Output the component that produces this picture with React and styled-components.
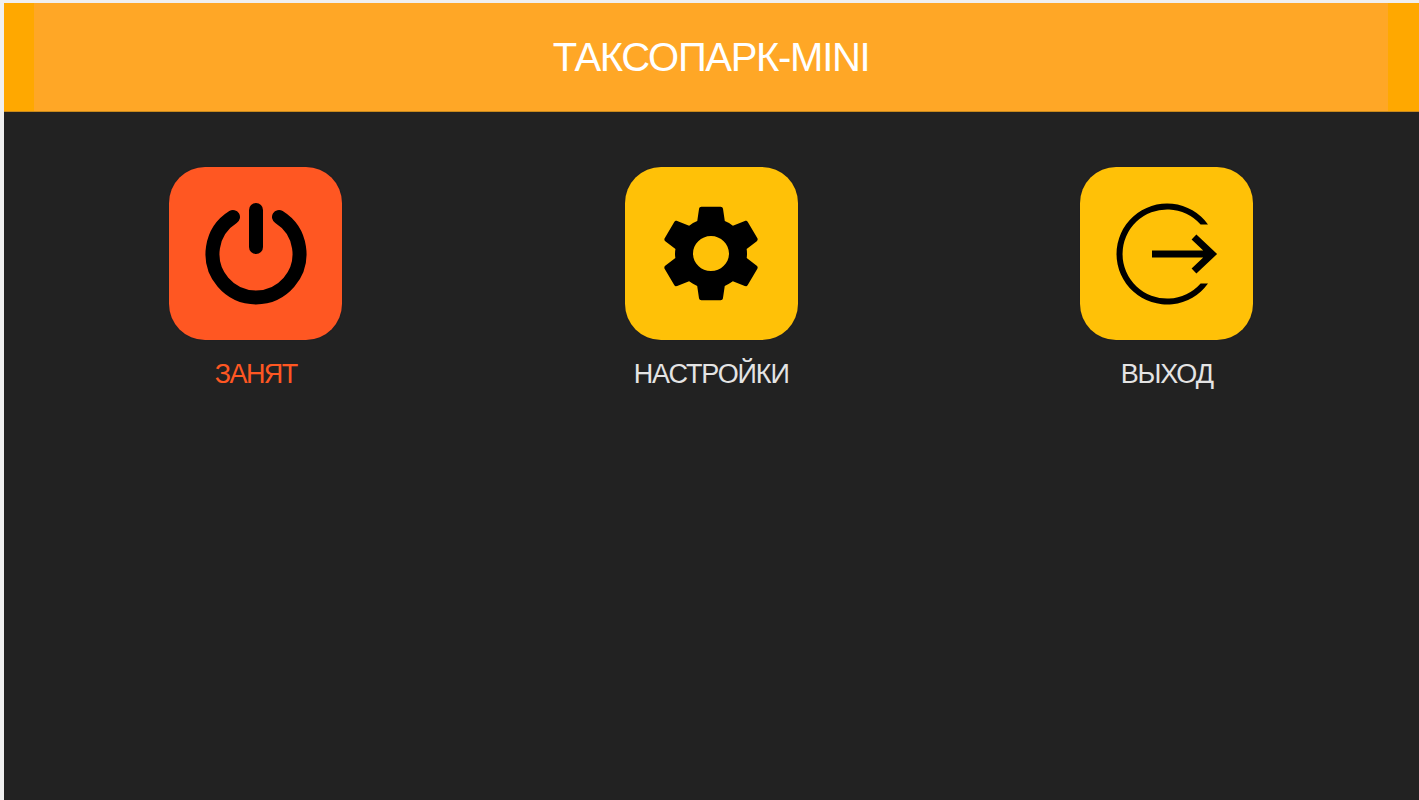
import styled, { createGlobalStyle } from 'styled-components';

const GlobalStyle = createGlobalStyle`
  html, body {
    margin: 0;
    height: 100%;
    background-color: #f0f0f0;
  }
  #root {
    height: 100%;
  }
`;

const Screen = styled.div`
  display: flex;
  flex-direction: column;
  height: 800px;
  padding: 3px 0 0 4px;
  box-sizing: border-box;
  overflow: hidden;
  font-family: "Liberation Sans", Arial, sans-serif;
  background-color: #222222;
  box-shadow: inset 4px 3px 0 #f0f0f0;
`;

const Header = styled.header`
  display: flex;
  height: 108px;
  padding: 0 31px 0 30px;
  background-color: #ffa800;
  border-bottom: 1px solid #c98a1c;
  box-sizing: content-box;
`;

const Title = styled.h1`
  flex: 1;
  margin: 0;
  font-size: 40px;
  font-weight: 400;
  line-height: 109px;
  letter-spacing: -1.3px;
  text-align: center;
  color: #ffffff;
  background-color: #ffa726;
`;

const Menu = styled.main`
  display: grid;
  grid-template-columns: repeat(3, 1fr);
  padding: 55px 24.5px 0 24px;
`;

const MenuItem = styled.button`
  display: flex;
  flex-direction: column;
  align-items: center;
  padding: 0;
  border: none;
  background: none;
  font-family: inherit;
  cursor: pointer;
`;

const Tile = styled.div`
  display: flex;
  align-items: center;
  justify-content: center;
  width: 173px;
  height: 173px;
  border-radius: 36px;
  background-color: ${(props) => (props.$busy ? '#ff5722' : '#ffc107')};
  box-shadow: 0 0 1px #14142a;
`;

const Label = styled.span`
  margin-top: 18px;
  font-size: 27px;
  line-height: 32px;
  letter-spacing: ${(props) => (props.$busy ? '-1.6px' : '-1.1px')};
  color: ${(props) => (props.$busy ? '#ff5722' : '#e4e4e4')};
`;

const PowerIcon = () => (
  <svg width="110" height="110" viewBox="0 0 110 110" fill="none" stroke="#000" strokeWidth="14" strokeLinecap="round">
    <path d="M32 18 A43.5 43.5 0 1 0 78 18" />
    <path d="M55 11 V48" />
  </svg>
);

const GearIcon = () => (
  <svg width="120" height="117" viewBox="0 0 24 24" preserveAspectRatio="none" fill="#000">
    <path d="M19.14,12.94c0.04-0.3,0.06-0.61,0.06-0.94c0-0.32-0.02-0.64-0.07-0.94l2.03-1.58c0.18-0.14,0.23-0.41,0.12-0.61l-1.92-3.32c-0.12-0.22-0.37-0.29-0.59-0.22l-2.39,0.96c-0.5-0.38-1.03-0.7-1.62-0.94L14.4,2.81c-0.04-0.24-0.24-0.41-0.48-0.41h-3.84c-0.24,0-0.43,0.17-0.47,0.41L9.25,5.35C8.66,5.59,8.12,5.92,7.63,6.29L5.24,5.33c-0.22-0.08-0.47,0-0.59,0.22L2.74,8.87C2.62,9.08,2.66,9.34,2.86,9.48l2.03,1.58C4.84,11.36,4.8,11.69,4.8,12s0.02,0.64,0.07,0.94l-2.03,1.58c-0.18,0.14-0.23,0.41-0.12,0.61l1.92,3.32c0.12,0.22,0.37,0.29,0.59,0.22l2.39-0.96c0.5,0.38,1.03,0.7,1.62,0.94l0.36,2.54c0.05,0.24,0.24,0.41,0.48,0.41h3.84c0.24,0,0.44-0.17,0.47-0.41l0.36-2.54c0.59-0.24,1.13-0.56,1.62-0.94l2.39,0.96c0.22,0.08,0.47,0,0.59-0.22l1.92-3.32c0.12-0.22,0.07-0.47-0.12-0.61L19.14,12.94z M12,15.6c-1.98,0-3.6-1.62-3.6-3.6s1.62-3.6,3.6-3.6s3.6,1.62,3.6,3.6S13.98,15.6,12,15.6z" />
  </svg>
);

const ExitIcon = () => (
  <svg width="110" height="110" viewBox="0 0 110 110">
    <path d="M96 25.5 A50.5 50.5 0 1 0 96 84.5 H88.6 A44.6 44.6 0 1 1 88.6 25.5 Z" fill="#000" />
    <path d="M40 55 H100 M82 38 L100 55 L82 72" fill="none" stroke="#000" strokeWidth="7" />
  </svg>
);

const items = [
  { label: 'ЗАНЯТ', icon: <PowerIcon />, busy: true },
  { label: 'НАСТРОЙКИ', icon: <GearIcon /> },
  { label: 'ВЫХОД', icon: <ExitIcon /> },
];

const App = () => (
  <Screen>
    <GlobalStyle />
    <Header>
      <Title>ТАКСОПАРК-MINI</Title>
    </Header>
    <Menu>
      {items.map((item) => (
        <MenuItem key={item.label}>
          <Tile $busy={item.busy}>{item.icon}</Tile>
          <Label $busy={item.busy}>{item.label}</Label>
        </MenuItem>
      ))}
    </Menu>
  </Screen>
);

export default App;
